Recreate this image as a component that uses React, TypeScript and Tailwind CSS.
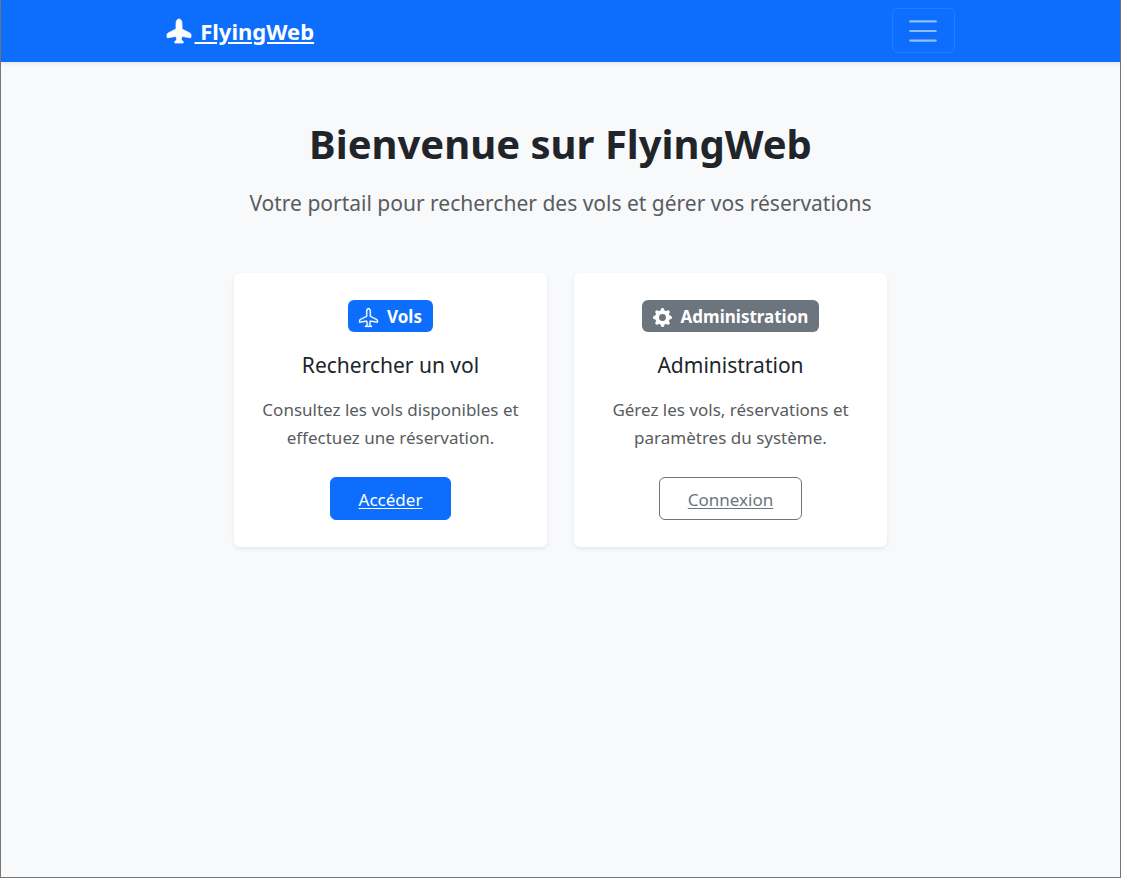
import type { ReactNode } from 'react'
import clsx from 'clsx'
import { BsAirplane, BsAirplaneFill, BsGearFill } from 'react-icons/bs'

type Variant = 'primary' | 'secondary'

interface HomeCardProps {
  variant: Variant
  icon: ReactNode
  badge: string
  title: string
  text: string
  action: string
  href: string
}

function Navbar() {
  return (
    <nav className="bg-[#0d6efd] px-4 pt-2 pb-[9px] shadow-[0_2px_4px_rgba(0,0,0,0.075)]">
      <div className="mx-auto flex max-w-[788px] items-center justify-between">
        <a href="#" className="flex items-center gap-1 text-[22px] leading-8 font-bold text-white">
          <BsAirplaneFill className="size-6 overflow-visible stroke-current stroke-[0.5]" aria-hidden="true" />
          <span className="whitespace-pre underline underline-offset-2"> FlyingWeb</span>
        </a>
        <button
          type="button"
          aria-label="Menu"
          className="flex h-[45px] w-[63px] items-center justify-center rounded-md border border-white/10"
        >
          <svg viewBox="0 0 30 30" className="size-8" aria-hidden="true">
            <path
              stroke="rgba(255,255,255,0.55)"
              strokeLinecap="round"
              strokeMiterlimit="10"
              strokeWidth="2"
              d="M3 6h24M3 15h24M3 24h24"
            />
          </svg>
        </button>
      </div>
    </nav>
  )
}

function HomeCard({ variant, icon, badge, title, text, action, href }: HomeCardProps) {
  return (
    <div className="flex flex-col items-center rounded-md bg-white p-[27px] text-center shadow-[0_2px_4px_rgba(0,0,0,0.075)]">
      <span
        className={clsx(
          'flex h-8 items-center gap-[9px] rounded-md px-[11px] pt-0.5 text-[17px] font-bold text-white',
          variant === 'primary' ? 'bg-[#0d6efd]' : 'bg-[#6c757d]'
        )}
      >
        {icon}
        {badge}
      </span>
      <h2 className="mt-5 text-[21px] leading-[26px] text-[#212529]">{title}</h2>
      <p className="mt-[18px] text-[17px] leading-7 text-[#585c60]">{text}</p>
      <a
        href={href}
        className={clsx(
          'mt-[25px] rounded-md border px-7 pt-[9px] pb-[7px] text-[17px] leading-[25px] underline underline-offset-2',
          variant === 'primary'
            ? 'border-[#0d6efd] bg-[#0d6efd] text-white'
            : 'border-[#6c757d] text-[#6c757d]'
        )}
      >
        {action}
      </a>
    </div>
  )
}

export default function App() {
  return (
    <div className="min-h-screen border-x border-b border-[#777777] bg-[#f8f9fb] font-['Noto_Sans','Open_Sans',sans-serif]">
      <Navbar />
      <main className="mx-auto max-w-[653px] pt-14">
        <header className="text-center">
          <h1 className="text-[40px] leading-[52px] font-bold text-[#212529]">Bienvenue sur FlyingWeb</h1>
          <p className="mt-[17px] text-[21px] leading-8 text-[#585c60]">
            Votre portail pour rechercher des vols et gérer vos réservations
          </p>
        </header>

        <div className="mt-[54px] grid grid-cols-1 gap-[27px] sm:grid-cols-2">
          <HomeCard
            variant="primary"
            icon={<BsAirplane className="size-[19px] overflow-visible stroke-current stroke-[0.2]" aria-hidden="true" />}
            badge="Vols"
            title="Rechercher un vol"
            text="Consultez les vols disponibles et effectuez une réservation."
            action="Accéder"
            href="#vols"
          />
          <HomeCard
            variant="secondary"
            icon={<BsGearFill className="size-[19px]" aria-hidden="true" />}
            badge="Administration"
            title="Administration"
            text="Gérez les vols, réservations et paramètres du système."
            action="Connexion"
            href="#connexion"
          />
        </div>
      </main>
    </div>
  )
}
